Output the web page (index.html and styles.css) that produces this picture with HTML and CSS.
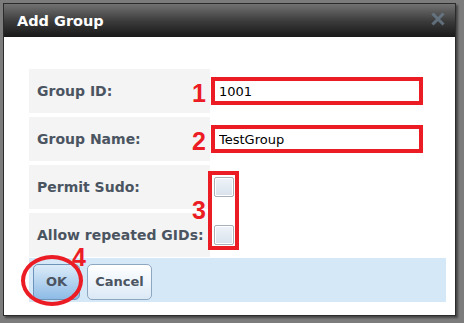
FILE: index.html
```html
<!DOCTYPE html>
<html lang="en">
<head>
  <meta charset="UTF-8">
  <title>Add Group</title>
  <link rel="stylesheet" href="styles.css">
</head>
<body>
  <div class="dialog">
    <div class="titlebar">
      <span class="title">Add Group</span>
      <svg class="close" width="14" height="14" viewBox="0 0 14 14">
        <path d="M2.5 2.5 L11.5 11.5 M11.5 2.5 L2.5 11.5" stroke="#6b7d8e" stroke-width="3" stroke-linecap="square"/>
      </svg>
    </div>
    <div class="content">
      <div class="form">
        <div class="label">Group ID:</div>
        <div class="field"><input class="text-input" type="text" value="1001"></div>
        <div class="label">Group Name:</div>
        <div class="field"><input class="text-input" type="text" value="TestGroup"></div>
        <div class="label">Permit Sudo:</div>
        <div class="field"><span class="checkbox"></span></div>
        <div class="label">Allow repeated GIDs:</div>
        <div class="field"><span class="checkbox"></span></div>

        <span class="mark mark-1">1</span>
        <span class="mark mark-2">2</span>
        <span class="mark mark-3">3</span>
        <span class="check-box-mark"></span>
      </div>
      <div class="buttons">
        <button class="btn btn-ok">OK</button>
        <button class="btn btn-cancel">Cancel</button>
        <span class="mark mark-4">4</span>
        <span class="ring"></span>
      </div>
    </div>
  </div>
</body>
</html>
```

FILE: styles.css
```css
body {
  margin: 0;
  background-color: #7c7c7c;
  font-family: "DejaVu Sans", Verdana, sans-serif;
  width: 464px;
  height: 323px;
  overflow: hidden;
}
.dialog {
  margin: 3px 0 0 3px;
  width: 451px;
  height: 311px;
  border: 1px solid #2b2b2b;
  background-color: #fff;
  box-shadow: 2px 2px 2px rgba(0, 0, 0, 0.45);
}
.titlebar {
  height: 32px;
  border-bottom: 1px solid #1a1a1a;
  background: linear-gradient(#727272, #3a3a3a 55%, #1b1b1b);
  display: flex;
  align-items: center;
  justify-content: space-between;
  padding: 0 10px 0 13px;
}
.title {
  color: #fff;
  font-weight: bold;
  font-size: 14.5px;
  padding-top: 2px;
}
.close {
  margin-top: -2px;
  opacity: 0.8;
}
.content {
  padding: 32px 9px 0 25px;
}
.form {
  position: relative;
  display: grid;
  grid-template-columns: 181px 1fr;
  grid-auto-rows: 44px;
  row-gap: 4px;
}
.label {
  background-color: #f4f4f4;
  color: #4b5461;
  font-weight: bold;
  font-size: 14px;
  display: flex;
  align-items: center;
  padding-left: 8px;
}
.field {
  display: flex;
  align-items: center;
  padding-left: 1px;
}
.text-input {
  width: 212px;
  height: 28px;
  box-sizing: border-box;
  border: 4px solid #ec1c24;
  padding: 0 0 0 4px;
  font-family: "DejaVu Sans", Verdana, sans-serif;
  font-size: 13px;
  color: #000;
  background: #fff;
  outline: none;
}
.checkbox {
  display: block;
  width: 18px;
  height: 18px;
  margin-left: 3px;
  border: 1px solid #a9b0b8;
  border-radius: 2px;
  background: linear-gradient(#eef3f8, #d9e2ec);
  box-shadow: inset 0 0 0 1px #fff;
}
.mark {
  position: absolute;
  color: #ec1c24;
  font-family: "Liberation Sans", Arial, sans-serif;
  font-weight: bold;
  font-size: 25px;
  line-height: 25px;
}
.mark-1 { left: 163px; top: 12px; }
.mark-2 { left: 163px; top: 60px; }
.mark-3 { left: 163px; top: 129px; }
.check-box-mark {
  position: absolute;
  left: 179px;
  top: 102px;
  width: 23px;
  height: 71px;
  border: 4px solid #ec1c24;
}
.buttons {
  position: relative;
  margin-top: 1px;
  height: 44px;
  background-color: #d5e8f8;
  display: flex;
  align-items: center;
  gap: 7px;
  padding-left: 4px;
}
.btn {
  height: 36px;
  border: 1px solid #8ea7c0;
  border-radius: 5px;
  background: linear-gradient(#ffffff, #dbe9f6);
  color: #4b5461;
  font-family: "DejaVu Sans", Verdana, sans-serif;
  font-weight: bold;
  font-size: 13px;
  padding: 0;
  margin-top: 3px;
}
.btn-ok {
  width: 47px;
  background: linear-gradient(#dcebf8, #8dbbe6);
  border-color: #6f94ba;
}
.btn-cancel {
  width: 65px;
}
.mark-4 { left: 43px; top: -13px; }
.ring {
  position: absolute;
  left: -8px;
  top: -3px;
  width: 54px;
  height: 43px;
  border: 4px solid #ec1c24;
  border-radius: 50%;
}
```
